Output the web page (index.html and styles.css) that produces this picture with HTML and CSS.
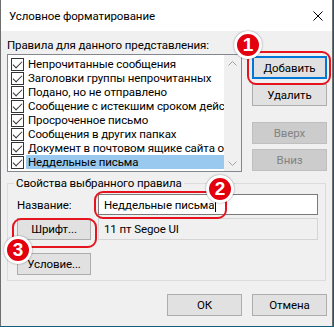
FILE: index.html
```html
<!DOCTYPE html>
<html lang="ru">
<head>
  <meta charset="UTF-8" />
  <title>Условное форматирование</title>
  <link rel="stylesheet" href="styles.css">
</head>
<body>

  <div class="dialog">
    <div class="titlebar">
      <span class="title">Условное форматирование</span>
      <svg class="close" width="10" height="10" viewBox="0 0 10 10">
        <path d="M0.5 0.5L9.5 9.5M9.5 0.5L0.5 9.5" stroke="#000" stroke-width="1" fill="none" />
      </svg>
    </div>

    <div class="body">
      <div class="rules-label">Правила для данного представления:</div>

      <div class="rules">
        <div class="listbox">
          <ul class="items">
            <li class="item"><span class="check"></span><span class="text">Непрочитанные сообщения</span></li>
            <li class="item"><span class="check"></span><span class="text">Заголовки группы непрочитанных</span></li>
            <li class="item"><span class="check"></span><span class="text">Подано, но не отправлено</span></li>
            <li class="item"><span class="check"></span><span class="text">Сообщение с истекшим сроком действия</span></li>
            <li class="item"><span class="check"></span><span class="text">Просроченное письмо</span></li>
            <li class="item"><span class="check"></span><span class="text">Сообщения в других папках</span></li>
            <li class="item"><span class="check"></span><span class="text">Документ в почтовом ящике сайта общего доступа</span></li>
            <li class="item selected"><span class="check"></span><span class="text">Неддельные письма</span></li>
          </ul>
          <div class="scrollbar">
            <svg width="9" height="5" viewBox="0 0 9 5"><path d="M0.5 4.5L4.5 0.5L8.5 4.5" stroke="#a3a3a3" fill="none" /></svg>
            <svg width="9" height="5" viewBox="0 0 9 5"><path d="M0.5 0.5L4.5 4.5L8.5 0.5" stroke="#a3a3a3" fill="none" /></svg>
          </div>
        </div>

        <div class="side-buttons">
          <button class="btn focused">Добавить</button>
          <button class="btn">Удалить</button>
          <button class="btn disabled move-up">Вверх</button>
          <button class="btn disabled">Вниз</button>
        </div>
      </div>

      <fieldset class="props">
        <legend>Свойства выбранного правила</legend>
        <div class="prop-row">
          <label class="prop-label">Название:</label>
          <div class="textbox">Неддельные письма<span class="caret"></span></div>
        </div>
        <div class="prop-row">
          <button class="btn prop-btn">Шрифт...</button>
          <div class="fontbox">11 пт Segoe UI</div>
        </div>
        <div class="prop-row condition">
          <button class="btn prop-btn">Условие...</button>
        </div>
      </fieldset>

      <div class="footer">
        <button class="btn">ОК</button>
        <button class="btn">Отмена</button>
      </div>
    </div>

    <!-- Red callouts drawn over the dialog -->
    <div class="outline outline-add"></div>
    <div class="outline outline-name"></div>
    <div class="outline outline-font"></div>
    <div class="badge badge-1">1</div>
    <div class="badge badge-2">2</div>
    <div class="badge badge-3">3</div>
  </div>

</body>
</html>
```

FILE: styles.css
```css
/* Base reset and fonts */
* {
  margin: 0; padding: 0; box-sizing: border-box;
}
body {
  font-family: Roboto, 'Noto Sans', sans-serif;
  font-size: 11.5px;
  letter-spacing: -0.1px;
  line-height: 16px;
  color: #000;
  background: #175b7c;
  width: 334px;
  height: 327px;
  overflow: hidden;
}

/* Window frame */
.dialog {
  position: relative;
  width: 333px;
  height: 326px;
  background: #f0f0f0;
  border-left: 1px solid #6e6e6e;
  border-right: 1px solid #6e6e6e;
}
.titlebar {
  height: 31px;
  background: #fff;
  display: flex;
  align-items: center;
  justify-content: space-between;
  padding: 0 9px 0 8px;
}
.close {
  display: block;
}

.body {
  padding: 0 5px 0 6px;
}
.rules-label {
  margin-top: 6px;
  margin-bottom: 1px;
}

/* Rules list + side buttons */
.rules {
  display: flex;
  align-items: flex-start;
  gap: 10px;
}
.listbox {
  width: 235px;
  height: 118px;
  background: #fff;
  border: 1px solid #828790;
  display: flex;
}
.items {
  list-style: none;
  flex-grow: 1;
  min-width: 0;
  padding-top: 2px;
}
.item {
  height: 14px;
  display: flex;
  align-items: center;
  padding-left: 3px;
}
.check {
  width: 13px;
  height: 13px;
  flex-shrink: 0;
  border: 1px solid #333;
  background: #fff;
  position: relative;
}
.check::after {
  content: '';
  position: absolute;
  left: 3px;
  top: 0px;
  width: 4px;
  height: 8px;
  border-right: 1px solid #333;
  border-bottom: 1px solid #333;
  transform: rotate(45deg);
}
.item .text {
  flex-grow: 1;
  min-width: 0;
  height: 14px;
  line-height: 14px;
  margin-left: 2px;
  padding-left: 2px;
  white-space: nowrap;
  overflow: hidden;
}
.item.selected .text {
  background: #99c9ef;
}
.scrollbar {
  width: 17px;
  flex-shrink: 0;
  background: #f0f0f0;
  display: flex;
  flex-direction: column;
  justify-content: space-between;
  align-items: center;
  padding: 6px 0 5px;
}
.scrollbar svg {
  display: block;
}

.side-buttons {
  display: flex;
  flex-direction: column;
  gap: 5px;
  margin-top: 2px;
}
.side-buttons .move-up {
  margin-top: 11px;
}

/* Buttons */
.btn {
  width: 75px;
  height: 22px;
  font-family: inherit;
  font-size: inherit;
  letter-spacing: inherit;
  line-height: 16px;
  color: #000;
  background: #e1e1e1;
  border: 1px solid #adadad;
}
.btn.focused {
  height: 23px;
  border: 2px solid #0078d7;
}
.btn.disabled {
  background: #cccccc;
  border-color: #bfbfbf;
  color: #838383;
}

/* Selected rule properties */
.props {
  width: 319px;
  margin-top: 3px;
  padding: 0 7px 5px 9px;
  border: 1px solid #dcdcdc;
}
.props legend {
  margin-left: -3px;
  padding: 0 2px;
  line-height: 16px;
}
.prop-row {
  display: flex;
  align-items: center;
  margin-top: 3px;
}
.prop-row.condition {
  margin-top: 13px;
}
.prop-label {
  width: 81px;
}
.prop-btn {
  width: 74px;
  margin-right: 7px;
}
.textbox {
  width: 220px;
  height: 21px;
  background: #fff;
  border: 1px solid #7a7a7a;
  padding-left: 5px;
  display: flex;
  align-items: center;
}
.caret {
  width: 1px;
  height: 14px;
  background: #000;
  margin-left: 1px;
}
.fontbox {
  width: 220px;
  height: 22px;
  border: 1px solid #d5d5d5;
  padding-left: 5px;
  display: flex;
  align-items: center;
}

.footer {
  display: flex;
  justify-content: flex-end;
  gap: 10px;
  margin-top: 13px;
}

/* Red callouts */
.outline {
  position: absolute;
  border: 2px solid #e5141e;
  border-radius: 9px;
}
.outline-add {
  left: 246px; top: 51px; width: 84px; height: 34px;
}
.outline-name {
  left: 93px; top: 191px; width: 133px; height: 28px;
}
.outline-font {
  left: 11px; top: 218px; width: 85px; height: 30px;
}
.badge {
  position: absolute;
  width: 28px;
  height: 28px;
  border-radius: 50%;
  background: #e3000f;
  border: 3px solid #fff;
  box-shadow: 0 0 2px rgba(0, 0, 0, 0.45);
  color: #fff;
  font-family: 'Liberation Sans', Arial, sans-serif;
  font-weight: bold;
  font-size: 19px;
  letter-spacing: 0;
  line-height: 22px;
  text-align: center;
}
.badge-1 { left: 233px; top: 31px; }
.badge-2 { left: 205px; top: 175px; }
.badge-3 { left: 3px; top: 236px; }
```
